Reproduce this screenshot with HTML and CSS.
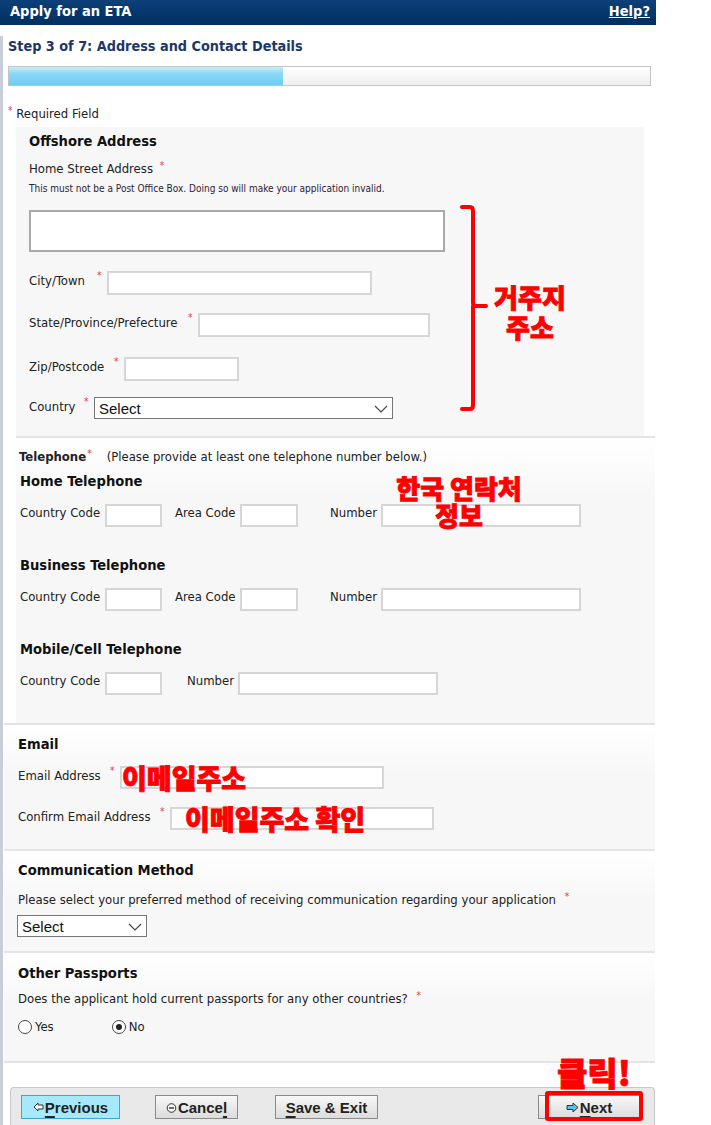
FILE: index.html
```html
<!DOCTYPE html>
<html lang="en">
<head>
  <meta charset="UTF-8">
  <meta name="viewport" content="width=device-width, initial-scale=1.0">
  <title>Apply for an ETA</title>
  <link rel="stylesheet" href="styles.css">
</head>
<body>

  <div class="topbar">
    <span class="topbar-title">Apply for an ETA</span>
    <a class="help" href="#">Help?</a>
  </div>

  <div class="main">
    <h1 class="step-title">Step 3 of 7: Address and Contact Details</h1>
    <div class="progress"><div class="progress-fill"></div></div>

    <p class="required-note"><span class="req">*</span> Required Field</p>

    <!-- Offshore address -->
    <div class="section offshore">
      <h3>Offshore Address</h3>
      <div class="label-line">Home Street Address <span class="req">*</span></div>
      <p class="hint">This must not be a Post Office Box. Doing so will make your application invalid.</p>
      <textarea class="street"></textarea>

      <div class="field-row row-city">
        <label class="lbl-city" for="city">City/Town</label><span class="req">*</span>
        <input type="text" id="city" class="in-city">
      </div>
      <div class="field-row row-state">
        <label class="lbl-state" for="state">State/Province/Prefecture</label><span class="req">*</span>
        <input type="text" id="state" class="in-state">
      </div>
      <div class="field-row row-zip">
        <label class="lbl-zip" for="zip">Zip/Postcode</label><span class="req">*</span>
        <input type="text" id="zip" class="in-zip">
      </div>
      <div class="field-row row-country">
        <label class="lbl-country" for="country">Country</label><span class="req">*</span>
        <span class="select-wrap sel-country">
          <select id="country"><option>Select</option></select>
          <svg class="chevron" width="14" height="8" viewBox="0 0 14 8"><path d="M1 1 L7 7 L13 1" fill="none" stroke="#444" stroke-width="1.2"/></svg>
        </span>
      </div>

      <!-- annotation -->
      <svg class="bracket" width="30" height="208" viewBox="0 0 30 208">
        <path d="M2 2 H10 Q13 2 13 6 V98 Q13 101 16 101 H26 M13 101 V200 Q13 204 10 204 H2" fill="none" stroke="#ff0000" stroke-width="4" stroke-linecap="round" stroke-linejoin="round"/>
      </svg>
      <div class="note note-home">거주지<br>주소</div>
    </div>

    <!-- Telephone -->
    <div class="section telephone">
      <div class="tel-intro"><b>Telephone</b><span class="req req-tight">*</span><span class="tel-hint">(Please provide at least one telephone number below.)</span></div>

      <h3 class="tel-head">Home Telephone</h3>
      <div class="tel-row">
        <label class="tl-country">Country Code</label><input type="text" class="in-cc">
        <label class="tl-area">Area Code</label><input type="text" class="in-area">
        <label class="tl-number">Number</label><input type="text" class="in-number">
      </div>

      <h3 class="tel-head tel-head-gap">Business Telephone</h3>
      <div class="tel-row">
        <label class="tl-country">Country Code</label><input type="text" class="in-cc">
        <label class="tl-area">Area Code</label><input type="text" class="in-area">
        <label class="tl-number">Number</label><input type="text" class="in-number">
      </div>

      <h3 class="tel-head tel-head-gap">Mobile/Cell Telephone</h3>
      <div class="tel-row">
        <label class="tl-country">Country Code</label><input type="text" class="in-cc">
        <label class="tl-number tl-mobile">Number</label><input type="text" class="in-number">
      </div>

      <div class="note note-phone">한국 연락처<br>정보</div>
    </div>

    <!-- Email -->
    <div class="section wide email">
      <h3>Email</h3>
      <div class="field-row row-email">
        <label class="lbl-email">Email Address</label><span class="req">*</span>
        <span class="input-wrap">
          <input type="text" class="in-email">
          <span class="note note-input">이메일주소</span>
        </span>
      </div>
      <div class="field-row row-confirm">
        <label class="lbl-confirm">Confirm Email Address</label><span class="req">*</span>
        <span class="input-wrap">
          <input type="text" class="in-email">
          <span class="note note-input note-confirm">이메일주소 확인</span>
        </span>
      </div>
    </div>

    <!-- Communication -->
    <div class="section wide communication">
      <h3>Communication Method</h3>
      <p class="question">Please select your preferred method of receiving communication regarding your application <span class="req">*</span></p>
      <span class="select-wrap sel-method">
        <select><option>Select</option></select>
        <svg class="chevron" width="14" height="8" viewBox="0 0 14 8"><path d="M1 1 L7 7 L13 1" fill="none" stroke="#444" stroke-width="1.2"/></svg>
      </span>
    </div>

    <!-- Other passports -->
    <div class="section wide passports">
      <h3>Other Passports</h3>
      <p class="question">Does the applicant hold current passports for any other countries? <span class="req">*</span></p>
      <div class="radio-row">
        <span class="radio"></span><span class="radio-text">Yes</span>
        <span class="radio checked radio-no"></span><span class="radio-text">No</span>
      </div>
    </div>
    <div class="end-line"></div>

    <!-- Buttons -->
    <div class="button-bar">
      <button type="button" class="btn btn-prev">
        <svg width="11" height="10" viewBox="0 0 11 10"><path d="M1 5 L5 1 V3 H10 V7 H5 V9 Z" fill="#fff" stroke="#333" stroke-width="1"/></svg>
        <span><u>P</u>revious</span>
      </button>
      <button type="button" class="btn btn-cancel">
        <svg width="11" height="11" viewBox="0 0 11 11"><circle cx="5.5" cy="6" r="4.3" fill="#f4f4f4" stroke="#333" stroke-width="1"/><path d="M3 6 H8" stroke="#333" stroke-width="1.4"/></svg>
        <span>Cance<u>l</u></span>
      </button>
      <button type="button" class="btn btn-save"><span><u>S</u>ave &amp; Exit</span></button>
      <button type="button" class="btn btn-next">
        <svg width="13" height="11" viewBox="0 0 13 11"><path d="M12 5.5 L7 1 V3.5 H1 V7.5 H7 V10 Z" fill="#56c4f0" stroke="#333" stroke-width="1"/></svg>
        <span><u>N</u>ext</span>
      </button>

      <div class="next-mark"></div>
      <div class="note note-click">클릭!</div>
    </div>
  </div>

</body>
</html>
```

FILE: styles.css
```css
* {
  box-sizing: border-box;
  margin: 0;
  padding: 0;
}
body {
  font-family: "DejaVu Sans Condensed", "DejaVu Sans", sans-serif;
  font-stretch: condensed;
  font-size: 13px;
  color: #222;
  background-color: #fff;
}
h3 {
  font-size: 14.6px;
  line-height: 18px;
  color: #111;
}
.req {
  color: #e23b3b;
  font-size: 10px;
  line-height: 10px;
  align-self: flex-start;
}

/* Header */
.topbar {
  width: 656px;
  height: 25px;
  background: linear-gradient(#0d4079, #002e5f);
  color: #fff;
  display: flex;
  justify-content: space-between;
  align-items: center;
  padding: 0 6px 4px 10px;
  font-size: 14.5px;
  font-weight: bold;
}
.help {
  color: #fff;
}
.main {
  width: 656px;
  border-left: 3px solid #c8cdd7;
}
.step-title {
  font-size: 14.3px;
  line-height: 20px;
  color: #1d3767;
  margin: 11px 0 0 5px;
}
.progress {
  margin: 10px 0 0 5px;
  width: 643px;
  height: 20px;
  border: 1px solid #c4c4c4;
  background: linear-gradient(#fff, #eee);
}
.progress-fill {
  width: 274px;
  height: 100%;
  background: linear-gradient(#c8eefc 0, #8cd9f6 35%, #6ccdf3 100%);
}
.required-note {
  margin: 20px 0 0 5px;
  line-height: 16px;
}
.required-note .req {
  vertical-align: top;
}

/* Sections */
.section {
  position: relative;
}
.offshore {
  margin: 5px 0 0 13px;
  width: 628px;
  height: 309px;
  background-color: #f7f7f7;
  padding: 5px 0 0 13px;
}
.label-line {
  margin-top: 11px;
  line-height: 16px;
}
.label-line .req {
  vertical-align: top;
  margin-left: 3px;
}
.hint {
  margin-top: 5px;
  font-size: 10px;
  line-height: 14px;
  color: #2d2133;
}
.street {
  display: block;
  margin-top: 14px;
  width: 416px;
  height: 42px;
  border: 2px solid #a9a9a9;
  background: #fff;
  resize: none;
}
.field-row {
  display: flex;
  align-items: flex-start;
}
.field-row label {
  line-height: 16px;
  margin-top: 2px;
}
.field-row .req {
  width: 10px;
  margin-top: 0;
}
input {
  height: 24px;
  border: 2px solid #d6d6d6;
  background: #fff;
}
.row-city { margin-top: 19px; }
.row-state { margin-top: 18px; }
.row-zip { margin-top: 20px; }
.row-country { margin-top: 16px; }
.lbl-city { width: 68px; }
.lbl-state { width: 159px; }
.lbl-zip { width: 85px; }
.lbl-country { width: 55px; }
.in-city { width: 265px; }
.in-state { width: 232px; }
.in-zip { width: 115px; }

.select-wrap {
  position: relative;
  display: inline-block;
}
.select-wrap select {
  appearance: none;
  -webkit-appearance: none;
  display: block;
  width: 100%;
  height: 22px;
  border: 1px solid #767676;
  border-radius: 0;
  background: #fff;
  font-family: "Liberation Sans", Arial, sans-serif;
  font-size: 15px;
  color: #111;
  padding: 0 4px;
}
.chevron {
  position: absolute;
  right: 5px;
  top: 8px;
}
.sel-country { width: 299px; }
.sel-method {
  width: 130px;
  margin-top: 7px;
}

/* Red annotations */
.note {
  position: absolute;
  color: #ff0000;
  font-family: "Noto Sans CJK KR", sans-serif;
  font-weight: 900;
  -webkit-text-stroke: 0.9px #ff0000;
  text-align: center;
  white-space: nowrap;
}
.bracket {
  position: absolute;
  left: 444px;
  top: 78px;
}
.note-home {
  left: 459px;
  top: 155px;
  width: 110px;
  font-size: 26px;
  line-height: 30px;
}
.note-phone {
  left: 368px;
  top: 36px;
  width: 150px;
  font-size: 26px;
  line-height: 27px;
}

/* Telephone */
.telephone {
  margin-left: 13px;
  width: 639px;
  border-top: 2px solid #e4e4e4;
  background: linear-gradient(#fff, #f7f7f7 60px);
  padding: 11px 0 28px 3px;
}
.tel-intro {
  line-height: 16px;
}
.tel-intro b {
  font-size: 13px;
}
.req-tight {
  vertical-align: top;
  margin-left: 1px;
}
.tel-hint {
  margin-left: 15px;
}
.tel-head {
  margin: 7px 0 0 1px;
}
.tel-head-gap {
  margin-top: 29px;
}
.tel-row {
  display: flex;
  align-items: flex-start;
  margin: 14px 0 0 1px;
}
.tel-row label {
  line-height: 16px;
  margin-top: 1px;
}
.tel-row input {
  height: 23px;
}
.tl-country { width: 85px; }
.tl-area { width: 65px; margin-left: 13px; }
.tl-number { width: 51px; margin-left: 32px; }
.tl-mobile { margin-left: 25px; }
.in-cc { width: 57px; }
.in-area { width: 58px; }
.in-number { width: 200px; }

/* Wide sections */
.wide {
  margin-left: 1px;
  width: 651px;
  border-top: 2px solid #e4e4e4;
  background: linear-gradient(#fff, #f7f7f7 50px);
  padding-left: 14px;
}
.email {
  padding-top: 10px;
  padding-bottom: 19px;
}
.row-email { margin-top: 13px; }
.row-confirm { margin-top: 18px; }
.lbl-email { width: 92px; }
.lbl-confirm { width: 142px; }
.in-email {
  width: 264px;
  height: 23px;
}
.input-wrap {
  position: relative;
  display: inline-block;
}
.note-input {
  left: 2px;
  top: -3px;
  font-size: 27px;
  line-height: 29px;
  text-align: left;
}
.note-confirm {
  left: 15px;
}
.communication {
  padding-top: 10px;
  padding-bottom: 14px;
}
.communication .question {
  margin-top: 13px;
}
.question {
  line-height: 16px;
}
.question .req {
  vertical-align: top;
  margin-left: 5px;
}
.sel-method {
  margin-left: -1px;
}
.passports {
  padding-top: 11px;
  padding-bottom: 26px;
}
.passports .question {
  margin-top: 9px;
}
.radio-row {
  display: flex;
  align-items: center;
  margin-top: 12px;
  line-height: 16px;
}
.radio {
  width: 14px;
  height: 14px;
  border: 1px solid #444;
  border-radius: 50%;
  background: #fff;
  display: inline-flex;
  align-items: center;
  justify-content: center;
}
.radio.checked::after {
  content: "";
  width: 6px;
  height: 6px;
  border-radius: 50%;
  background: #222;
}
.radio-text {
  margin-left: 3px;
}
.radio-no {
  margin-left: 58px;
}
.end-line {
  margin-left: 1px;
  width: 651px;
  border-top: 2px solid #e4e4e4;
}

/* Buttons */
.button-bar {
  position: relative;
  margin: 24px 0 0 7px;
  width: 645px;
  border: 1px solid #c9c9c9;
  border-bottom: none;
  border-radius: 4px 4px 0 0;
  background-color: #e9e9e9;
  display: flex;
  align-items: center;
  padding: 7px 14px 10px 10px;
}
.btn {
  height: 24px;
  border: 1px solid #8a8a8a;
  background: linear-gradient(#f8f8f8, #dcdcdc);
  font-family: "Liberation Sans", Arial, sans-serif;
  font-size: 15px;
  font-weight: bold;
  color: #222;
  display: flex;
  align-items: center;
  justify-content: center;
  gap: 1px;
}
.btn u {
  text-decoration-thickness: 2px;
  text-underline-offset: 3px;
}
.btn-prev {
  width: 99px;
  background: #a6e9fb;
  border-color: #3aa8d6;
}
.btn-cancel {
  width: 83px;
  margin-left: 35px;
}
.btn-save {
  width: 103px;
  margin-left: 37px;
}
.btn-next {
  width: 102px;
  margin-left: auto;
}
.next-mark {
  position: absolute;
  left: 534px;
  top: 3px;
  width: 98px;
  height: 30px;
  border: 4px solid #ff0000;
  border-radius: 3px;
}
.note-click {
  left: 546px;
  top: -33px;
  font-size: 33px;
  line-height: 34px;
}
```
